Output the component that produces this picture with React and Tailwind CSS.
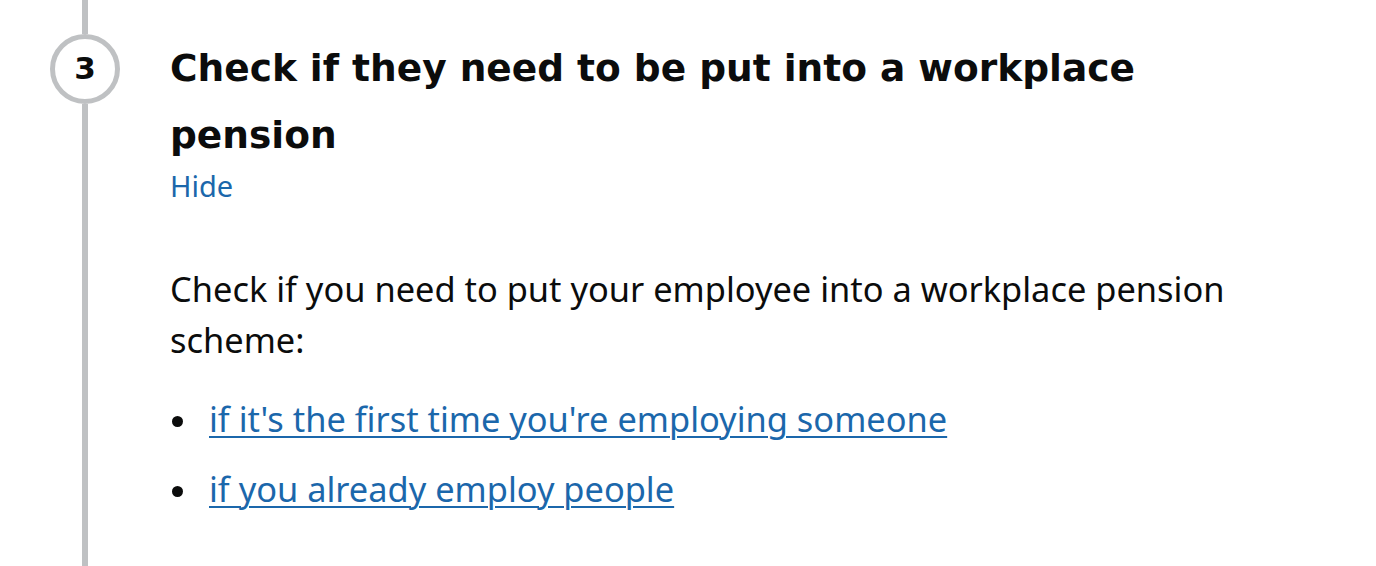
const links = [
  "if it's the first time you're employing someone",
  'if you already employ people',
]

function StepNumber({ n }) {
  return (
    <div className="flex h-[70px] w-[70px] shrink-0 items-center justify-center rounded-full border-[5px] border-[#bfc1c3] bg-white pb-[2px]">
      <span className="font-['DejaVu_Sans',sans-serif] text-[31px] leading-none font-bold text-[#0b0c0c]">
        {n}
      </span>
    </div>
  )
}

export default function App() {
  return (
    <div className="flex h-[566px] overflow-hidden bg-white text-[#0b0c0c]">
      <div className="flex w-[170px] shrink-0 flex-col items-center">
        <div className="h-[34px] w-[6px] bg-[#bfc1c3]" />
        <StepNumber n={3} />
        <div className="w-[6px] flex-1 bg-[#bfc1c3]" />
      </div>

      <div className="w-[1100px] pt-[35px]">
        <h2 className="font-['DejaVu_Sans',sans-serif] text-[37.5px] leading-[67px] font-bold">
          Check if they need to be put into a workplace pension
        </h2>
        <button
          type="button"
          className="mt-[1px] block font-['Noto_Sans',sans-serif] text-[29px] leading-[32px] text-[#1b67ab]"
        >
          Hide
        </button>

        <div className="mt-[61px] font-['Noto_Sans',sans-serif] text-[34.4px] leading-[51px]">
          <p>
            Check if you need to put your employee into a workplace pension
            scheme:
          </p>
          <ul className="mt-[28px] space-y-[19px]">
            {links.map((text) => (
              <li key={text} className="flex items-start">
                <span className="mt-[23px] ml-[2px] h-[11px] w-[11px] shrink-0 rounded-full bg-[#0b0c0c]" />
                <a
                  href="#"
                  className="ml-[26px] text-[#1b67ab] underline decoration-[2px] underline-offset-[4px]"
                >
                  {text}
                </a>
              </li>
            ))}
          </ul>
        </div>
      </div>
    </div>
  )
}
